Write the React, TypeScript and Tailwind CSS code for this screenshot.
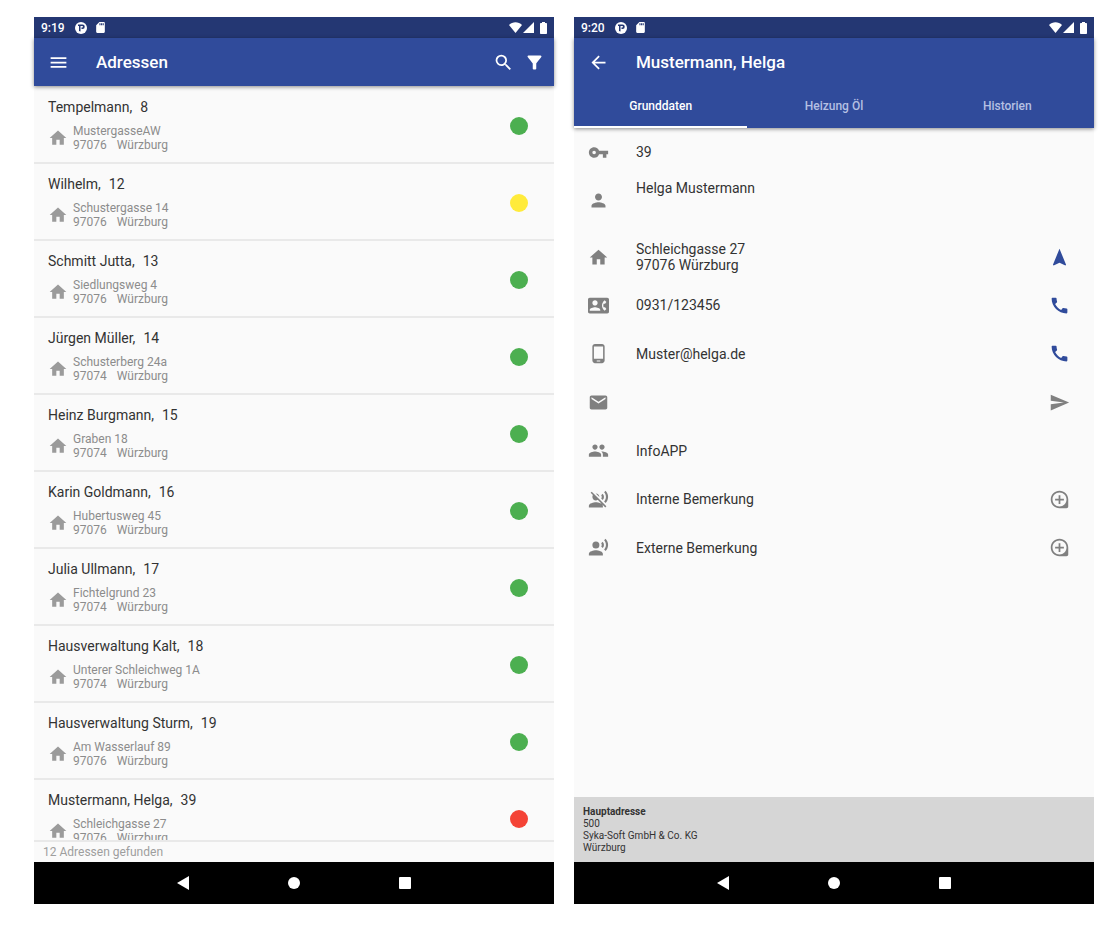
import type { ReactNode } from "react";
import type { IconType } from "react-icons";
import {
  MdArrowBack,
  MdCall,
  MdContactPhone,
  MdEmail,
  MdFilterAlt,
  MdHome,
  MdLoupe,
  MdMenu,
  MdNavigation,
  MdPeople,
  MdPerson,
  MdPhoneAndroid,
  MdRecordVoiceOver,
  MdSdCard,
  MdSearch,
  MdSend,
  MdVoiceOverOff,
  MdVpnKey,
} from "react-icons/md";

type Address = {
  name: string;
  id: number;
  street: string;
  zip: string;
  color: string;
};

const GREEN = "bg-[#4caf50]";
const YELLOW = "bg-[#ffeb3b]";
const RED = "bg-[#f44336]";

const addresses: Address[] = [
  { name: "Tempelmann,", id: 8, street: "MustergasseAW", zip: "97076", color: GREEN },
  { name: "Wilhelm,", id: 12, street: "Schustergasse 14", zip: "97076", color: YELLOW },
  { name: "Schmitt Jutta,", id: 13, street: "Siedlungsweg 4", zip: "97076", color: GREEN },
  { name: "Jürgen Müller,", id: 14, street: "Schusterberg 24a", zip: "97074", color: GREEN },
  { name: "Heinz Burgmann,", id: 15, street: "Graben 18", zip: "97074", color: GREEN },
  { name: "Karin Goldmann,", id: 16, street: "Hubertusweg 45", zip: "97076", color: GREEN },
  { name: "Julia Ullmann,", id: 17, street: "Fichtelgrund 23", zip: "97074", color: GREEN },
  { name: "Hausverwaltung Kalt,", id: 18, street: "Unterer Schleichweg 1A", zip: "97074", color: GREEN },
  { name: "Hausverwaltung Sturm,", id: 19, street: "Am Wasserlauf 89", zip: "97076", color: GREEN },
  { name: "Mustermann, Helga,", id: 39, street: "Schleichgasse 27", zip: "97076", color: RED },
];

type Detail = {
  icon: IconType;
  text: string;
  action?: IconType;
  label?: string;
  active?: boolean;
};

const details: Detail[] = [
  { icon: MdContactPhone, text: "0931/123456", action: MdCall, label: "Anrufen", active: true },
  { icon: MdPhoneAndroid, text: "Muster@helga.de", action: MdCall, label: "Mobil anrufen", active: true },
  { icon: MdEmail, text: "", action: MdSend, label: "E-Mail senden" },
  { icon: MdPeople, text: "InfoAPP" },
  { icon: MdVoiceOverOff, text: "Interne Bemerkung", action: MdLoupe, label: "Interne Bemerkung öffnen" },
  { icon: MdRecordVoiceOver, text: "Externe Bemerkung", action: MdLoupe, label: "Externe Bemerkung öffnen" },
];

function StatusBar({ time }: { time: string }) {
  return (
    <div className="flex h-[21px] shrink-0 items-center bg-[#243773] px-[7px] text-white">
      <span className="text-xs font-medium">{time}</span>

      <svg viewBox="0 0 24 24" className="ml-2.5 h-3 w-3" aria-hidden="true">
        <circle cx="12" cy="12" r="12" fill="#fff" />
        <path d="M6 5h9a4.500 4.500 0 0 1 0 9h-2v-3h1.500a1.500 1.500 0 0 0 0-3H11v11a8 8 0 0 1-3-1V8H6z" fill="#243773" />
      </svg>

      <MdSdCard className="ml-[7px] h-[13px] w-[13px]" />

      {/* Wifi, signal, battery */}
      <div className="ml-auto flex items-center">
        <svg viewBox="0 0 13 11" className="h-[11px] w-[13px]" aria-hidden="true">
          <path d="M6.500 11 0 3C3.500-.6 9.500-.6 13 3z" fill="#fff" />
        </svg>
        <svg viewBox="0 0 11 11" className="ml-px h-[11px] w-[11px]" aria-hidden="true">
          <path d="M11 0v11H0z" fill="#fff" />
        </svg>
        <svg viewBox="0 0 7 12" className="ml-1.5 h-3 w-[7px]" aria-hidden="true">
          <path d="M2 0h3v1h1.200q.8 0 .8.800v9.400q0 .8-.8.800H.8Q0 12 0 11.200V1.800Q0 1 .8 1H2z" fill="#fff" />
        </svg>
      </div>
    </div>
  );
}

function NavBar() {
  return (
    <nav className="flex h-[42px] shrink-0 items-center justify-center gap-[99px] bg-black">
      <button type="button" aria-label="Zurück">
        <svg viewBox="0 0 12 14" className="h-3.5 w-3" aria-hidden="true">
          <path d="M12 0v14L0 7z" fill="#fff" />
        </svg>
      </button>
      <button type="button" aria-label="Start" className="h-3 w-3 rounded-full bg-white" />
      <button type="button" aria-label="Übersicht" className="h-3 w-3 rounded-[1px] bg-white" />
    </nav>
  );
}

function Phone({ time, children }: { time: string; children: ReactNode }) {
  return (
    <section className="flex min-w-0 flex-1 flex-col bg-[#fafafa]">
      <StatusBar time={time} />
      {children}
      <NavBar />
    </section>
  );
}

function AddressRow({ item }: { item: Address }) {
  return (
    <li className="flex items-center border-b-2 border-[#e9e9e9] pt-3 pr-[26px] pb-2.5 pl-3.5">
      <div className="flex-1">
        <h2 className="flex gap-2 text-sm leading-4 text-[#333333]">
          <span>{item.name}</span>
          <span>{item.id}</span>
        </h2>

        <div className="mt-[9px] flex items-center gap-[5px] text-xs leading-3.5 text-[#8c8c8c]">
          <MdHome className="h-5 w-5 text-[#9b9b9b]" />
          <div>
            <p>{item.street}</p>
            <p className="flex gap-2.5">
              <span>{item.zip}</span>
              <span>Würzburg</span>
            </p>
          </div>
        </div>
      </div>

      <span className={`h-[18px] w-[18px] rounded-full ${item.color}`} />
    </li>
  );
}

function AddressList() {
  return (
    <Phone time="9:19">
      <header className="z-10 flex h-12 shrink-0 items-center bg-[#304b9b] pr-[9px] pl-3.5 text-white shadow-[0_1px_4px_rgba(0,0,0,0.45)]">
        <button type="button" aria-label="Menü" className="w-12">
          <MdMenu className="h-[21px] w-[21px]" />
        </button>
        <h1 className="flex-1 pt-0.5 text-[17px] font-medium">Adressen</h1>
        <button type="button" aria-label="Suchen">
          <MdSearch className="h-[21px] w-[21px]" />
        </button>
        <button type="button" aria-label="Filter" className="ml-2.5">
          <MdFilterAlt className="h-[21px] w-[21px]" />
        </button>
      </header>

      <ul className="min-h-0 flex-1 overflow-hidden pt-px">
        {addresses.map((item) => (
          <AddressRow key={item.id} item={item} />
        ))}
      </ul>

      <footer className="h-[22px] shrink-0 border-t-2 border-[#e9e9e9] pl-[9px] text-xs leading-5 text-[#9e9e9e]">
        12 Adressen gefunden
      </footer>
    </Phone>
  );
}

function DetailRow({ item }: { item: Detail }) {
  const Icon = item.icon;
  const Action = item.action;

  return (
    <li className="flex items-center pr-6 pl-3.5">
      <Icon className="h-[21px] w-[21px] text-[#808080]" />
      <span className="ml-[27px] flex-1">{item.text}</span>
      {Action && (
        <button
          type="button"
          aria-label={item.label}
          className={item.active ? "text-[#304b9b]" : "text-[#808080]"}
        >
          <Action className="h-[21px] w-[21px]" />
        </button>
      )}
    </li>
  );
}

function AddressDetail() {
  return (
    <Phone time="9:20">
      <header className="z-10 shrink-0 bg-[#304b9b] text-white shadow-[0_1px_4px_rgba(0,0,0,0.45)]">
        <div className="flex h-12 items-center pl-3.5">
          <button type="button" aria-label="Zurück" className="w-12">
            <MdArrowBack className="h-[21px] w-[21px]" />
          </button>
          <h1 className="pt-0.5 text-[17px] font-medium">Mustermann, Helga</h1>
        </div>

        {/* Tabs */}
        <div role="tablist" className="grid h-[42px] grid-cols-3 text-xs font-medium">
          <button type="button" role="tab" aria-selected="true" className="border-b-2 border-white">
            Grunddaten
          </button>
          <button type="button" role="tab" aria-selected="false" className="border-b-2 border-transparent text-[#b5c0e3]">
            Heizung Öl
          </button>
          <button type="button" role="tab" aria-selected="false" className="border-b-2 border-transparent text-[#b5c0e3]">
            Historien
          </button>
        </div>
      </header>

      <div className="min-h-0 flex-1 overflow-hidden text-sm leading-4 text-[#333333]">
        <div className="flex h-12 items-center pl-3.5">
          <MdVpnKey className="h-[21px] w-[21px] text-[#808080]" />
          <span className="ml-[27px]">39</span>
        </div>

        <div className="mb-[9px] flex h-12 items-center pl-3.5">
          <MdPerson className="h-[21px] w-[21px] text-[#808080]" />
          <span className="mt-1 ml-[27px] self-start">Helga Mustermann</span>
        </div>

        <div className="flex h-12 items-center pr-6 pl-3.5">
          <MdHome className="h-[21px] w-[21px] text-[#808080]" />
          <address className="ml-[27px] flex-1 not-italic">
            Schleichgasse 27
            <br />
            97076 Würzburg
          </address>
          <button type="button" aria-label="Navigation starten" className="text-[#304b9b]">
            <MdNavigation className="h-[21px] w-[21px]" />
          </button>
        </div>

        <ul className="grid h-[291px] grid-rows-6">
          {details.map((item) => (
            <DetailRow key={item.label ?? item.text} item={item} />
          ))}
        </ul>
      </div>

      <footer className="shrink-0 bg-[#d6d6d6] px-[9px] pt-[9px] pb-2 text-[10px] leading-3 text-[#333333]">
        <p className="font-bold">Hauptadresse</p>
        <p>500</p>
        <p>Syka-Soft GmbH &amp; Co. KG</p>
        <p>Würzburg</p>
      </footer>
    </Phone>
  );
}

export default function App() {
  return (
    <main className="flex h-screen gap-5 bg-white pt-[17px] pr-[26px] pb-[22px] pl-[34px] font-[Roboto,sans-serif]">
      <AddressList />
      <AddressDetail />
    </main>
  );
}
